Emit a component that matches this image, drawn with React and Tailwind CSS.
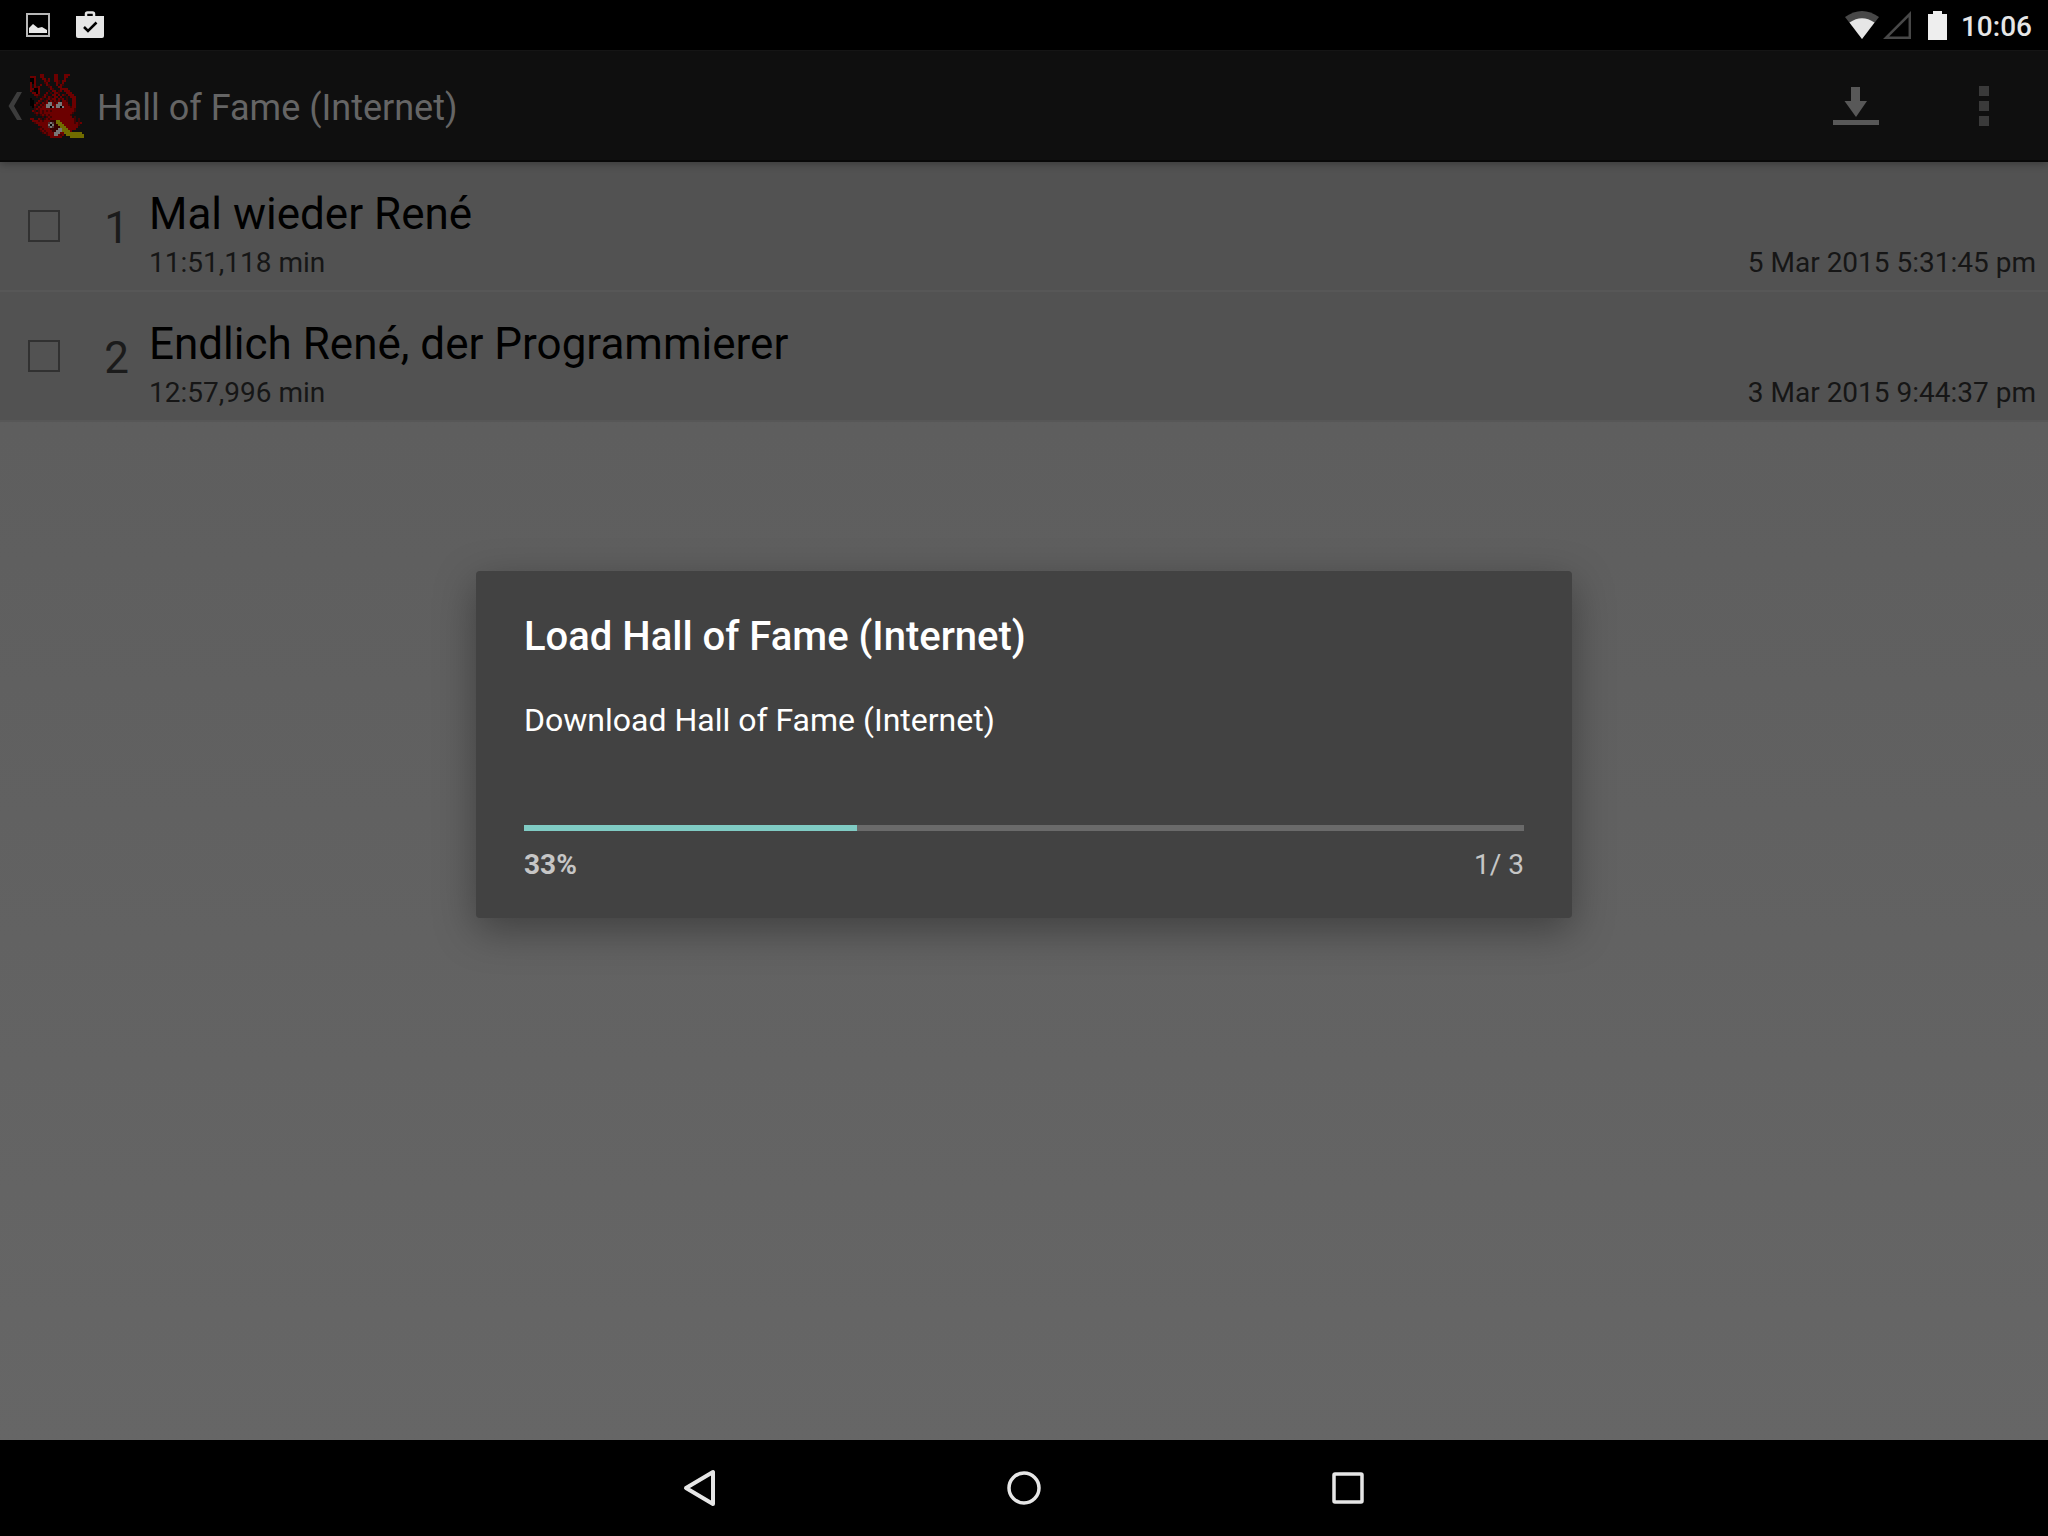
const DRAGON = [
  ".....RR.....RR...RRR.......",
  "RRR..RR.....RR...RR........",
  "KKR...RR.R..RR...R.........",
  "KKR....RrR..RRr.RR.........",
  "RKR....rR....Rr.R..........",
  "R.R..R..Rr...R.Rr..........",
  "R.RrR....rR...RR...........",
  "RRKKR.....Rr...RRRR........",
  "R.KKR....r.RR.rR.RRR.......",
  ".RRKR...R.r.RRr...RRR......",
  "..RRr..Rr..RR.R.Rr.RRR.....",
  "...r..rR.Rr.RR.R..r.RRR....",
  "K....Rr.rRrRR.RrR.r..RR....",
  "KK..Rr.rR.RrRrR.RRr..RR....",
  "KK.Rr.RrRWWRrRWWRRR..RR....",
  "KKRr.RrRWWWRRWWWRRRr.RR....",
  ".Kr.RrRRWWKWRWWKWRRRrRR....",
  "..rRrRRRRRRRRRRRRRRRRRr....",
  ".Rr.rRrRrRrRRRRRRRRRRRr....",
  "..rRrRrRRRRRRRRRRRRRRr.....",
  "...r.rRrRrRRRRRRRRRRr......",
  "......r.rRrRRRRRRRRRR.r....",
  "RR..Rr.rRrRRRRRRRRRRRRr.r..",
  ".RRRrRrRRRDDDYYRRRRRRRr.r..",
  "..rRRRRRRGWGDYYYRRRRRRrRrR.",
  "....RRRRRWKWDDYYYRRRRRRRr..",
  ".....rRRRGWGDDDYYYRRRRRR...",
  "....rRrRRRDDDDWWYYYRRRR....",
  ".....rRrRRRDDWWWYYYYR......",
  "......rRrRRRWWWRRYYYYYYYYY.",
  "........rRRRWWRrR.YYYYYYYYY",
  "..........RRRRRR....YYYYYYY",
];

const INK = { R: "#6c0000", r: "#400303", K: "#000000", W: "#777777", G: "#4c3030", D: "#350000", Y: "#716c00" };

function DragonLogo() {
  return (
    <svg width="54" height="64" viewBox="0 0 27 32" shapeRendering="crispEdges" aria-hidden="true">
      {DRAGON.flatMap((row, y) =>
        [...row].map((c, x) =>
          INK[c] ? <rect key={`${x}-${y}`} x={x} y={y} width="1" height="1" fill={INK[c]} /> : null
        )
      )}
    </svg>
  );
}

function StatusBar() {
  return (
    <div className="flex h-[50px] shrink-0 items-center justify-between bg-black pl-[26px] pr-4">
      <div className="flex items-center gap-[26px]">
        <svg width="24" height="24" viewBox="0 0 24 24" aria-label="Screenshot saved">
          <rect x="1" y="1" width="22" height="22" fill="none" stroke="#b8b8b8" strokeWidth="2" />
          <path d="M3 20V15L7 11L12 15L16 14L21 17V20Z" fill="#e8e8e8" />
        </svg>
        <svg width="28" height="32" viewBox="0 0 28 32" aria-label="App installed">
          <path d="M10 8V5Q10 3.500 11.500 3.500H16.500Q18 3.500 18 5V8" fill="none" stroke="#e6e6e6" strokeWidth="2.500" />
          <path d="M0 7H28V27Q28 29 26 29H2Q0 29 0 27Z" fill="#e6e6e6" />
          <path d="M8 18L12 22L20.500 13.500" fill="none" stroke="#000" strokeWidth="2.500" />
        </svg>
      </div>
      <div className="flex items-center">
        <svg width="34" height="28" viewBox="0 0 34 28" aria-label="Wi-Fi">
          <path d="M0 6Q17 -6 34 6L17 28Z" fill="#484848" />
          <path d="M4.500 11.500Q17 3 29.500 11.500L17 28Z" fill="#e6e6e6" />
        </svg>
        <svg className="ml-1" width="28" height="28" viewBox="0 0 28 28" aria-label="No signal">
          <path d="M26.800 3V26.800H3Z" fill="none" stroke="#484848" strokeWidth="2.500" />
        </svg>
        <svg className="ml-[17px]" width="19" height="29" viewBox="0 0 19 29" aria-label="Battery full">
          <path d="M5 0H14V3H19V29H0V3H5Z" fill="#eeeeee" />
        </svg>
        <span className="ml-[14px] pt-[3px] text-[28px] leading-8 font-medium text-[#e6e6e6]">10:06</span>
      </div>
    </div>
  );
}

function AppBar() {
  return (
    <header className="relative z-10 flex h-28 shrink-0 items-center border-t border-b-2 border-t-[#151515] border-b-[#080808] bg-[#0f0f0f] shadow-[0_2px_8px_rgba(0,0,0,0.3)]">
      <button aria-label="Navigate up" className="flex h-full items-center pl-2">
        <svg width="14" height="28" viewBox="0 0 14 28" aria-hidden="true">
          <path d="M9 0H14L6 14L14 28H9L0.500 14Z" fill="#3c3c3c" />
        </svg>
        <span className="ml-2">
          <DragonLogo />
        </span>
      </button>
      <h1 className="ml-[13px] flex-1 pt-1 text-[36px] leading-[42px] text-[#656565]">Hall of Fame (Internet)</h1>
      <button aria-label="Download" className="flex h-full w-32 items-center justify-center">
        <svg width="46" height="38" viewBox="0 0 46 38" aria-hidden="true">
          <path d="M18 0H27V14H34L23 30L11.500 14H18Z M0 33H46V38H0Z" fill="#585858" />
        </svg>
      </button>
      <button aria-label="More options" className="flex h-full w-32 items-center justify-center">
        <svg width="10" height="40" viewBox="0 0 10 40" aria-hidden="true">
          <path d="M0 0H10V10H0Z M0 15H10V25H0Z M0 30H10V40H0Z" fill="#3a3a3a" />
        </svg>
      </button>
    </header>
  );
}

const ENTRIES = [
  { rank: 1, name: "Mal wieder René", time: "11:51,118 min", date: "5 Mar 2015 5:31:45 pm" },
  { rank: 2, name: "Endlich René, der Programmierer", time: "12:57,996 min", date: "3 Mar 2015 9:44:37 pm" },
];

function Entry({ rank, name, time, date }) {
  const id = `entry-${rank}`;
  return (
    <li className="flex items-center border-b-2 border-[#575757] bg-[#525252] pt-[22px] pr-3 pb-[10px] pl-7">
      <input
        id={id}
        type="checkbox"
        className="mb-3 size-8 shrink-0 appearance-none border-2 border-[#313131] checked:bg-[#313131]"
      />
      <span className="mb-2 ml-[21px] w-12 text-right text-[44px] leading-[52px] text-[#1b1b1b]">{rank}</span>
      <div className="ml-5 flex-1">
        <label htmlFor={id} className="block text-[44px] leading-[60px] text-black">{name}</label>
        <div className="flex justify-between pt-[2px] text-[28px] leading-[34px] text-[#161616]">
          <span>{time}</span>
          <span>{date}</span>
        </div>
      </div>
    </li>
  );
}

function ProgressDialog() {
  return (
    <div className="absolute inset-0 z-20 flex items-center justify-center pb-[2px]">
      <section
        role="dialog"
        aria-labelledby="dialog-title"
        className="w-full max-w-[1096px] rounded bg-[#424242] px-12 pt-[42px] pb-9 shadow-[0_12px_40px_rgba(0,0,0,0.35)]"
      >
        <h2 id="dialog-title" className="text-[40px] leading-[48px] font-medium text-white">
          Load Hall of Fame (Internet)
        </h2>
        <p className="mt-[39px] text-[32px] leading-10 text-white">Download Hall of Fame (Internet)</p>
        <progress
          aria-label="Download progress"
          value="1"
          max="3"
          className="mt-[85px] block h-[6px] w-full appearance-none [&::-webkit-progress-bar]:bg-[#6a6a6a] [&::-webkit-progress-value]:bg-[#80cbc4]"
        />
        <div className="mt-[17px] flex justify-between text-[28px] leading-[34px] text-[#c6c6c6]">
          <span className="font-bold">33%</span>
          <span>1/ 3</span>
        </div>
      </section>
    </div>
  );
}

function NavBar() {
  return (
    <nav className="flex h-24 shrink-0 justify-center bg-black">
      <button aria-label="Back" className="flex w-[324px] items-center justify-center">
        <svg width="34" height="38" viewBox="0 0 34 38" fill="none" stroke="#e6e6e6" strokeWidth="4" strokeLinejoin="round" aria-hidden="true">
          <path d="M30 3V35L3 19Z" />
        </svg>
      </button>
      <button aria-label="Home" className="flex w-[324px] items-center justify-center">
        <svg width="34" height="34" viewBox="0 0 34 34" fill="none" stroke="#e6e6e6" strokeWidth="3.500" aria-hidden="true">
          <circle cx="17" cy="17" r="15" />
        </svg>
      </button>
      <button aria-label="Recent apps" className="flex w-[324px] items-center justify-center">
        <svg width="32" height="32" viewBox="0 0 32 32" fill="none" stroke="#e6e6e6" strokeWidth="3.500" aria-hidden="true">
          <rect x="2" y="2" width="28" height="28" rx="1" />
        </svg>
      </button>
    </nav>
  );
}

export default function App() {
  return (
    <div className="flex min-h-screen flex-col font-[Roboto,sans-serif]">
      <StatusBar />
      <main className="relative flex flex-1 flex-col bg-linear-to-b from-[#5b5b5b] to-[#666666]">
        <AppBar />
        <ul>
          {ENTRIES.map((entry) => (
            <Entry key={entry.rank} {...entry} />
          ))}
        </ul>
        <ProgressDialog />
      </main>
      <NavBar />
    </div>
  );
}
